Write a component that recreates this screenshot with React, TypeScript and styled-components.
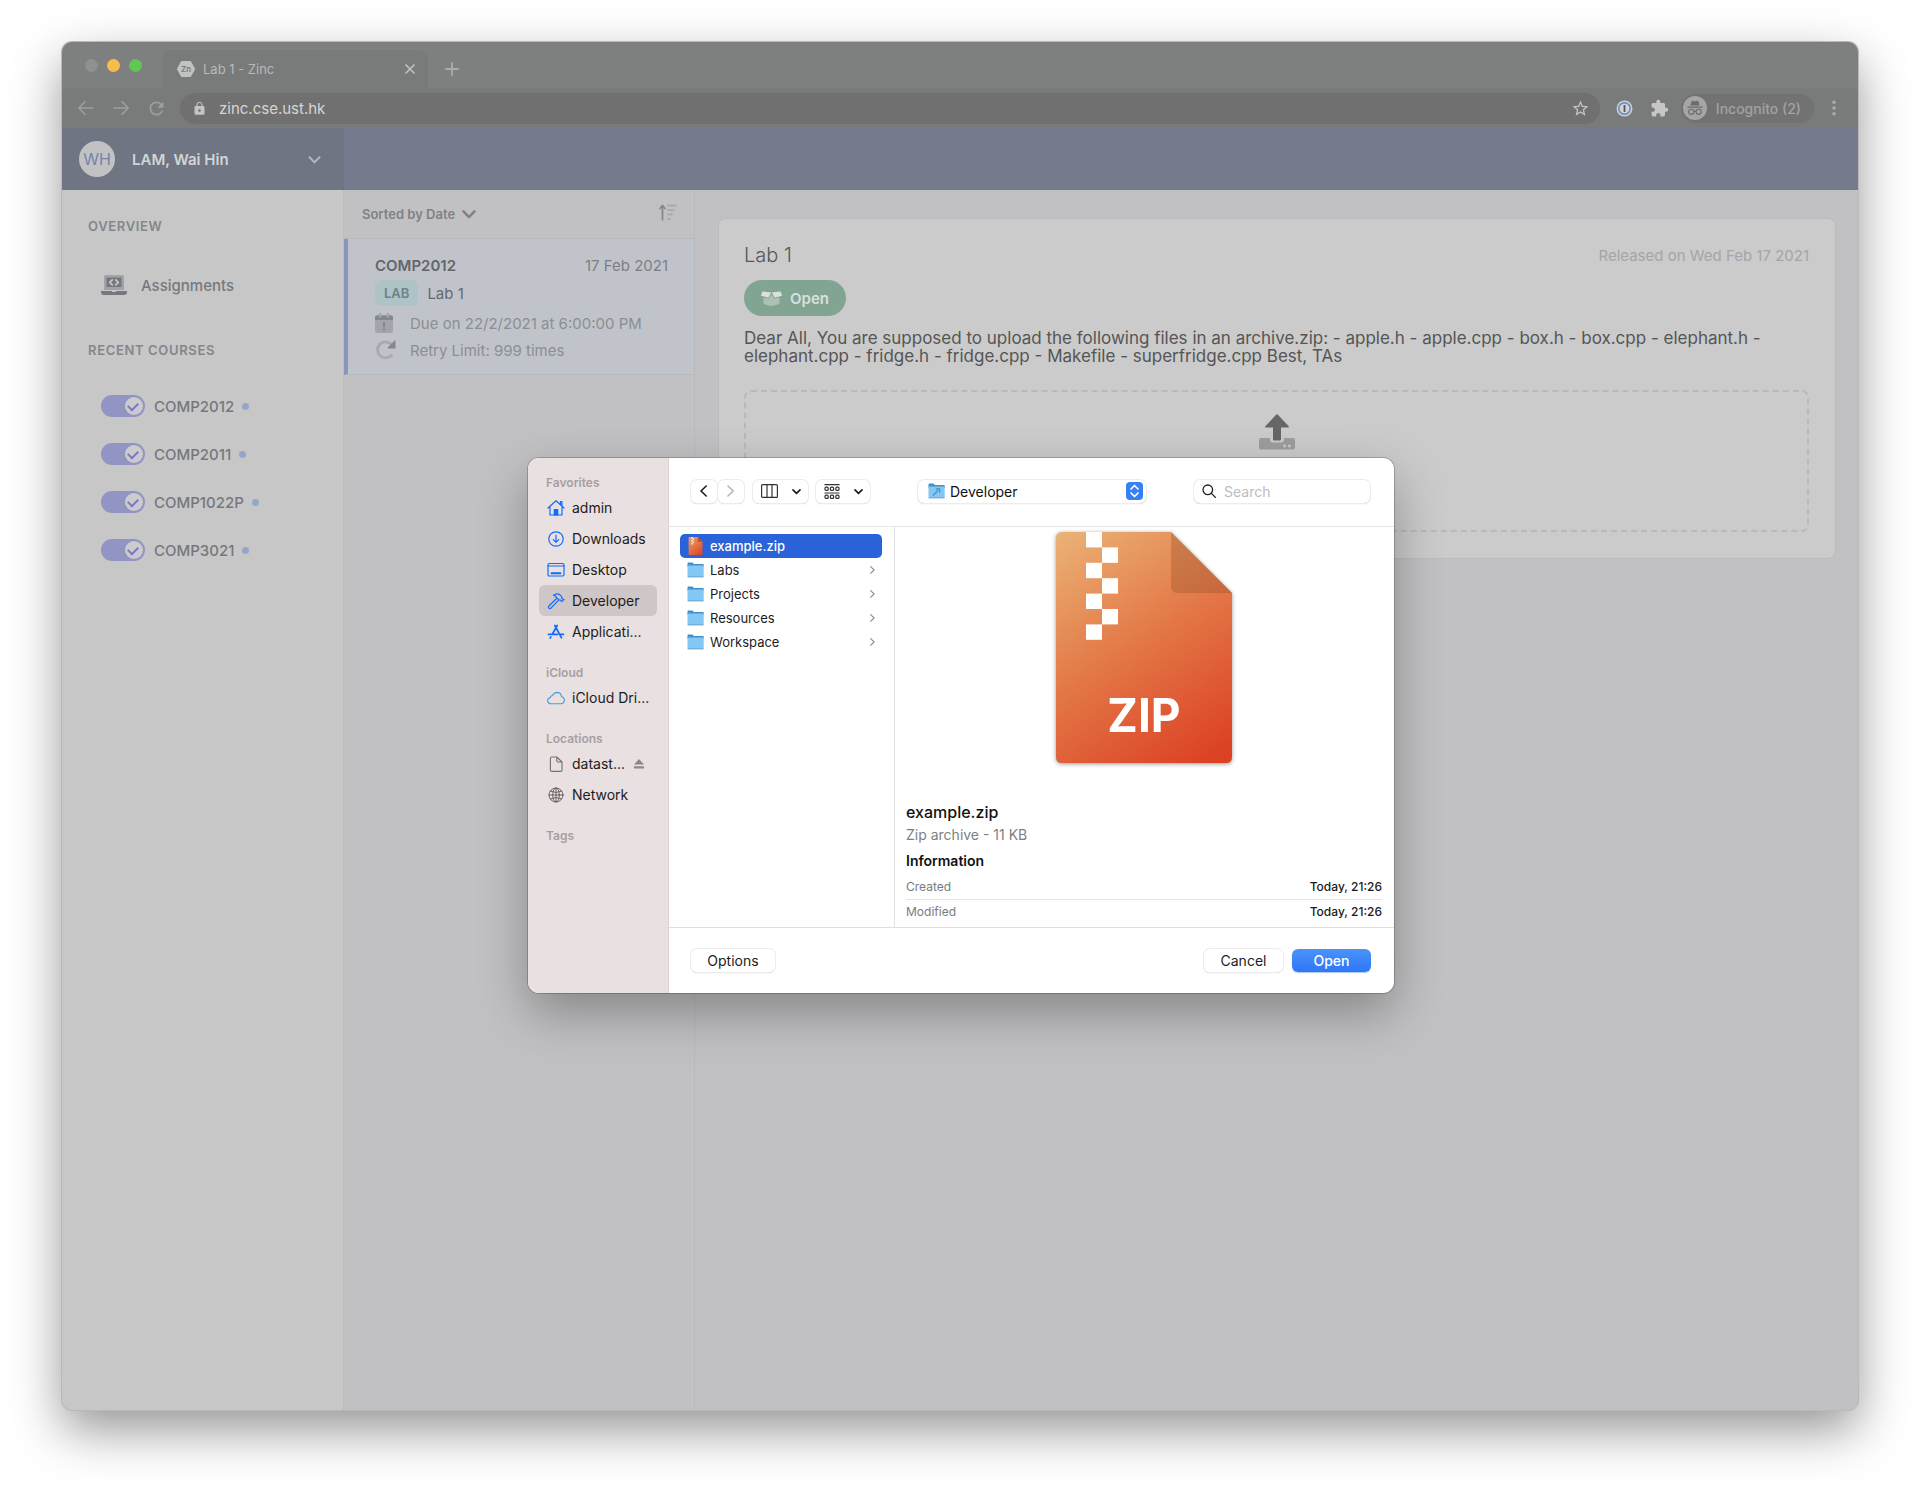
import React from "react";
import styled, { createGlobalStyle } from "styled-components";
import { MdExtension, MdLock, MdRefresh, MdStarBorder } from "react-icons/md";

const GlobalStyle = createGlobalStyle`
  * { box-sizing: border-box; }
  body {
    margin: 0;
    background: #ffffff;
    font-family: Inter, "Liberation Sans", sans-serif;
    font-size: 15px;
    color: #55585e;
  }
  button, input, select { font: inherit; color: inherit; }
  button { border: 0; padding: 0; background: none; }
  h1, h2, h3, p, ul { margin: 0; padding: 0; font-weight: 400; }
  ul { list-style: none; }
  svg { display: block; flex-shrink: 0; }
`;

/* ---------- browser window ---------- */

const Desktop = styled.div`
  display: flex;
  min-height: 100vh;
  padding: 42px 62px 81px;
`;

const BrowserWindow = styled.div`
  position: relative;
  flex: 1;
  display: flex;
  flex-direction: column;
  min-width: 0;
  border-radius: 10px;
  background: #c1c1c3;
  box-shadow: 0 0 0 1px #b9b9b9, 0 20px 50px rgba(0, 0, 0, 0.42);
`;

const TabStrip = styled.div`
  display: flex;
  align-items: flex-end;
  height: 46px;
  padding-left: 23px;
  border-radius: 10px 10px 0 0;
  background: #7e7f7f;
`;

const Lights = styled.div`
  display: flex;
  gap: 9px;
  align-self: center;
  padding-right: 21px;
`;

const Light = styled.button<{ $color: string }>`
  width: 13px;
  height: 13px;
  border-radius: 50%;
  background: ${(p) => p.$color};
`;

const Tab = styled.div`
  display: flex;
  align-items: center;
  gap: 8px;
  width: 265px;
  height: 38px;
  padding: 0 12px 0 14px;
  border-radius: 8px 8px 0 0;
  background: #797a7a;
  color: #b8b9b9;
  font-size: 13px;
`;

const TabTitle = styled.span`
  flex: 1;
`;

const NewTab = styled.button`
  display: grid;
  place-items: center;
  width: 48px;
  height: 38px;
  color: #abacac;
`;

const NavBar = styled.div`
  display: flex;
  align-items: center;
  height: 40px;
  padding: 0 4px 0 14px;
  background: #797a7a;
  color: #9d9e9e;
`;

const NavButton = styled.button<{ $width?: number }>`
  display: grid;
  place-items: center;
  width: ${(p) => p.$width ?? 35}px;
  height: 32px;
`;

const AddressBar = styled.div`
  display: flex;
  flex: 1;
  align-items: center;
  gap: 12px;
  height: 31px;
  margin-left: 14px;
  padding: 0 10px 0 12px;
  border-radius: 16px;
  background: #707071;
  color: #c4c4c4;
`;

const Address = styled.input`
  flex: 1;
  min-width: 0;
  padding: 0;
  border: 0;
  outline: 0;
  background: none;
  color: #d6d6d6;
  font-size: 15px;
`;

const Extensions = styled.div`
  display: flex;
  align-items: center;
  padding: 0 4px 0 7px;
  color: #c6c6c6;
`;

const IncognitoPill = styled.button`
  display: flex;
  align-items: center;
  gap: 9px;
  height: 29px;
  padding: 0 13px 0 2px;
  border-radius: 15px;
  background: #727272;
  color: #a2a2a2;
  font-size: 14px;
  font-weight: 500;
`;

/* ---------- web page ---------- */

const Page = styled.div`
  display: grid;
  flex: 1;
  grid-template-columns: 282px 351px 1fr;
  grid-template-rows: 62px 1fr;
`;

const Account = styled.button`
  display: flex;
  align-items: center;
  padding: 0 23px 0 17px;
  background: #6f7583;
  color: #d3d4d6;
  font-weight: 600;
  text-align: left;
`;

const AccountName = styled.span`
  flex: 1;
  padding-left: 17px;
`;

const Avatar = styled.span`
  display: grid;
  place-items: center;
  width: 36px;
  height: 36px;
  border-radius: 50%;
  background: #c1c2c3;
  color: #7583ac;
  font-size: 16px;
  font-weight: 400;
`;

const TopBar = styled.div`
  grid-column: 2 / 4;
  background: #757a8d;
`;

const Sidebar = styled.nav`
  padding: 26px 26px;
  border-right: 1px solid #bbbcc1;
  border-radius: 0 0 0 10px;
  background: #c7c7c7;
`;

const SideHeading = styled.h2`
  color: #83868c;
  font-size: 13px;
  font-weight: 600;
  line-height: 20px;
  letter-spacing: 0.05em;
`;

const SideLink = styled.a`
  display: flex;
  align-items: center;
  gap: 14px;
  height: 44px;
  margin: 27px 0 33px;
  padding-left: 13px;
  color: #75787e;
  font-weight: 500;
  text-decoration: none;
`;

const Courses = styled.ul`
  display: grid;
  gap: 24px;
  padding: 34px 0 0 13px;
`;

const Course = styled.label`
  display: flex;
  align-items: center;
  height: 24px;
  color: #75787e;
  font-weight: 500;
`;

const Toggle = styled.input`
  appearance: none;
  position: relative;
  display: flex;
  align-items: center;
  justify-content: flex-end;
  width: 44px;
  height: 22px;
  margin: 0 9px 0 0;
  padding: 2px;
  border-radius: 11px;
  background: #9195c4;
  &::before {
    content: "";
    width: 18px;
    height: 18px;
    border-radius: 50%;
    background: #cbcbcd;
  }
  &::after {
    content: "";
    position: absolute;
    top: 7px;
    right: 7px;
    width: 8px;
    height: 5px;
    border: solid #8078c0;
    border-width: 0 0 2px 2px;
    transform: rotate(-45deg);
  }
`;

const UnreadDot = styled.span`
  width: 7px;
  height: 7px;
  margin-left: 8px;
  border-radius: 50%;
  background: #94a7cb;
`;

const ListPane = styled.section`
  border-right: 1px solid #b8b9be;
`;

const SortBar = styled.div`
  display: flex;
  align-items: center;
  justify-content: space-between;
  height: 49px;
  padding: 0 17px 0 18px;
  border-bottom: 1px solid #b9babf;
`;

const SortButton = styled.button`
  display: flex;
  align-items: center;
  gap: 7px;
  color: #7f8287;
  font-size: 13px;
  font-weight: 600;
`;

const AssignmentItem = styled.article`
  padding: 15px 26px 13px 27px;
  border-bottom: 1px solid #b9babf;
  border-left: 4px solid #8796bd;
  background: #c0c4ca;
`;

const ItemRow = styled.div<{ $gap?: number; $top?: number }>`
  display: flex;
  align-items: center;
  gap: ${(p) => p.$gap ?? 0}px;
  min-height: 22px;
  margin-top: ${(p) => p.$top ?? 0}px;
  color: #8b8e93;
`;

const ItemCourse = styled.h3`
  flex: 1;
  color: #63666c;
  font-size: 15px;
  font-weight: 600;
`;

const ItemDate = styled.time`
  color: #7c7f85;
`;

const LabTag = styled.span`
  padding: 0 9px;
  border-radius: 6px;
  background: #aec3c5;
  color: #6a8487;
  font-size: 13px;
  font-weight: 600;
  line-height: 26px;
`;

const ItemTitle = styled.span`
  color: #65686e;
`;

const Details = styled.main`
  padding: 28px 22px 28px 23px;
`;

const Card = styled.section`
  padding: 22px 26px 26px 25px;
  border: 1px solid #bbbbbe;
  border-radius: 8px;
  background: #cbcbcb;
`;

const CardHeader = styled.header`
  display: flex;
  align-items: center;
  justify-content: space-between;
  height: 28px;
`;

const CardTitle = styled.h1`
  color: #55575b;
  font-size: 20px;
  font-weight: 300;
`;

const Released = styled.span`
  color: #a3a5a9;
`;

const StatusButton = styled.button`
  display: flex;
  align-items: center;
  gap: 8px;
  height: 36px;
  margin-top: 11px;
  padding: 0 17px;
  border-radius: 18px;
  background: #82a492;
  color: #dbe0dd;
  font-weight: 600;
`;

const Description = styled.p`
  margin-top: 13px;
  color: #555555;
  font-size: 17px;
  line-height: 18px;
`;

const DropZone = styled.button`
  display: flex;
  justify-content: center;
  align-items: flex-start;
  width: 100%;
  height: 142px;
  margin-top: 25px;
  padding-top: 22px;
  border: 2px dashed #b8b9bb;
  border-radius: 7px;
`;

/* ---------- file chooser ---------- */

const DialogLayer = styled.div`
  position: absolute;
  inset: 0;
  display: flex;
  align-items: flex-start;
  justify-content: center;
  padding: 416px 0 0 2px;
`;

const Dialog = styled.div`
  display: grid;
  grid-template-columns: 141px 1fr;
  width: 866px;
  border-radius: 11px;
  overflow: hidden;
  background: #ffffff;
  color: #1c1c1c;
  font-size: 14px;
  box-shadow: 0 0 0 1px rgba(0, 0, 0, 0.2), 0 20px 50px rgba(0, 0, 0, 0.3);
`;

const Places = styled.nav`
  display: flex;
  flex-direction: column;
  gap: 17px;
  padding: 16px 11px;
  border-right: 1px solid #ddd5d5;
  background: #e9e0e1;
`;

const PlacesHeading = styled.h2`
  padding-left: 7px;
  color: #a79fa0;
  font-size: 12px;
  font-weight: 600;
  line-height: 18px;
`;

const Place = styled.button<{ $active?: boolean }>`
  display: flex;
  align-items: center;
  gap: 7px;
  width: 118px;
  height: 31px;
  padding-left: 8px;
  border-radius: 6px;
  background: ${(p) => (p.$active ? "#cfc6c7" : "transparent")};
  white-space: nowrap;
`;

const Eject = styled.span`
  margin-left: auto;
  padding-right: 13px;
`;

const Toolbar = styled.div`
  display: flex;
  align-items: center;
  height: 69px;
  padding: 0 24px 2px 22px;
  border-bottom: 1px solid #e5e5e5;
`;

const ToolButton = styled.button<{ $width: number; $left?: number }>`
  display: flex;
  align-items: center;
  justify-content: center;
  gap: 14px;
  width: ${(p) => p.$width}px;
  height: 23px;
  margin-left: ${(p) => p.$left ?? 0}px;
  border-radius: 6px;
  background: #ffffff;
  box-shadow: 0 0 0 1px #ececec, 0 1px 1px #bcbcbc;
`;

const FolderPicker = styled.div`
  display: flex;
  align-items: center;
  gap: 5px;
  width: 228px;
  height: 23px;
  margin: 0 auto 0 48px;
  padding: 0 3px 0 10px;
  border-radius: 6px;
  box-shadow: 0 0 0 1px #ececec, 0 1px 1px #bcbcbc;
`;

const FolderSelect = styled.select`
  appearance: none;
  flex: 1;
  padding: 0;
  border: 0;
  outline: 0;
  background: none;
  color: #111111;
`;

const SearchBox = styled.label`
  display: flex;
  align-items: center;
  gap: 8px;
  width: 176px;
  height: 23px;
  padding: 0 8px;
  border-radius: 6px;
  box-shadow: 0 0 0 1px #ececec, 0 1px 1px #bcbcbc;
`;

const SearchInput = styled.input`
  flex: 1;
  min-width: 0;
  padding: 0;
  border: 0;
  outline: 0;
  background: none;
  &::placeholder { color: #bdbdbd; opacity: 1; }
`;

const Browser = styled.div`
  display: grid;
  grid-template-columns: 226px 1fr;
  height: 400px;
`;

const FileColumn = styled.ul`
  padding: 7px 12px 0 11px;
  border-right: 1px solid #e2e2e2;
`;

const FileRow = styled.button<{ $selected?: boolean }>`
  display: flex;
  align-items: center;
  gap: 6px;
  width: 202px;
  height: 24px;
  padding: 0 7px;
  border-radius: 5px;
  background: ${(p) => (p.$selected ? "#2962d9" : "transparent")};
  color: ${(p) => (p.$selected ? "#ffffff" : "#1c1c1c")};
  font-size: 13px;
  font-weight: ${(p) => (p.$selected ? 500 : 400)};
  text-align: left;
`;

const FileName = styled.span`
  flex: 1;
`;

const Preview = styled.section`
  display: flex;
  flex-direction: column;
  padding: 5px 12px 0 11px;
`;

const ZipArt = styled.svg`
  align-self: center;
  overflow: visible;
  filter: drop-shadow(0 1px 2px rgba(0, 0, 0, 0.4));
`;

const PreviewName = styled.h2`
  margin-top: 39px;
  color: #111111;
  font-size: 16px;
  font-weight: 500;
  line-height: 20px;
`;

const PreviewKind = styled.p`
  margin-top: 4px;
  color: #7f7f7f;
  line-height: 18px;
`;

const PreviewHeading = styled.h3`
  margin: 8px 0 4px;
  color: #111111;
  font-size: 14px;
  font-weight: 600;
  line-height: 18px;
`;

const InfoTable = styled.table`
  width: 100%;
  border-collapse: collapse;
  font-size: 12px;
`;

const InfoRow = styled.tr`
  height: 25px;
  & + & { border-top: 1px solid #e4e4e4; }
  th { padding: 0; color: #7a7a7a; font-weight: 400; text-align: left; }
  td { padding: 0; color: #1a1a1a; font-weight: 500; text-align: right; }
`;

const DialogFooter = styled.footer`
  display: flex;
  align-items: center;
  gap: 9px;
  height: 66px;
  padding: 0 23px 0 22px;
  border-top: 1px solid #e0e0e0;
`;

const DialogButton = styled.button<{ $width: number; $primary?: boolean; $first?: boolean }>`
  width: ${(p) => p.$width}px;
  height: 23px;
  margin-right: ${(p) => (p.$first ? "auto" : "0")};
  border-radius: 6px;
  background: ${(p) => (p.$primary ? "linear-gradient(#4a93fb, #2f76f6)" : "#ffffff")};
  box-shadow: ${(p) => (p.$primary ? "0 1px 1px #a9c8f5" : "0 0 0 1px #ececec, 0 1px 1px #bcbcbc")};
  color: ${(p) => (p.$primary ? "#ffffff" : "#1c1c1c")};
  font-weight: ${(p) => (p.$primary ? 500 : 400)};
`;

/* ---------- drawings ---------- */

type LineProps = { size?: number; w?: number; color?: string; children: React.ReactNode; box?: number };

const Line = ({ size = 18, w = 1.4, color = "currentColor", box = 18, children }: LineProps) => (
  <svg width={size} height={size} viewBox={`0 0 ${box} ${box}`} fill="none" stroke={color} strokeWidth={w} strokeLinecap="round" strokeLinejoin="round" aria-hidden="true">
    {children}
  </svg>
);

const Chevron = ({ width = 12, w = 2, color = "currentColor" }) => (
  <svg width={width} height={width} viewBox="0 0 12 12" fill="none" stroke={color} strokeWidth={w} strokeLinecap="round" strokeLinejoin="round" aria-hidden="true">
    <path d="M1.3 3.8 6 8.6l4.7-4.8" />
  </svg>
);

const SideChevron = ({ flip = false, color = "#1c1c1c", h = 12, w = 1.6 }) => (
  <svg width={h * 0.6} height={h} viewBox="0 0 7.2 12" fill="none" stroke={color} strokeWidth={w} strokeLinecap="round" strokeLinejoin="round" aria-hidden="true">
    <path d={flip ? "M6.2 1 1 6l5.2 5" : "M1 1l5.2 5L1 11"} />
  </svg>
);

const Favicon = () => (
  <svg width="18" height="16" viewBox="0 0 18 16" aria-hidden="true">
    <path d="M5 0h8q.8 0 1.200.7l3.500 6.300q.5 1 0 2l-3.500 6.300q-.4.7-1.200.7H5q-.8 0-1.200-.7L.3 9q-.5-1 0-2L3.800.7Q4.200 0 5 0z" fill="#c1c2c2" />
    <text x="9" y="11" textAnchor="middle" fontSize="8" fontWeight="600" fill="#787979">Zn</text>
  </svg>
);

const LaptopCode = () => (
  <svg width="26" height="20" viewBox="0 0 26 20" aria-hidden="true">
    <path d="M4.500 0h17A1.500 1.500 0 0 1 23 1.500V15H3V1.500A1.500 1.500 0 0 1 4.500 0z" fill="#a1a3a7" />
    <path d="M5.500 2.500h15V12h-15z" fill="#75787e" />
    <path d="M11.300 4.800 8.700 7.300l2.600 2.500M14.700 4.800l2.600 2.500-2.600 2.500" fill="none" stroke="#c7c7c7" strokeWidth="1.700" strokeLinecap="round" strokeLinejoin="round" />
    <path d="M0 16h10.500l.8 1h3.400l.8-1H26v1a3 3 0 0 1-3 3H3a3 3 0 0 1-3-3z" fill="#75787e" />
  </svg>
);

const CalendarAlert = () => (
  <svg width="18" height="20" viewBox="0 0 18 20" aria-hidden="true">
    <path d="M0 7h18v11a2 2 0 0 1-2 2H2a2 2 0 0 1-2-2zM4 0h2.400v4H4zM11.600 0H14v4h-2.400z" fill="#a2a5aa" />
    <path d="M2 2.300h2v2h2.400v-2h5.200v2H14v-2h2a2 2 0 0 1 2 2V7H0V4.300a2 2 0 0 1 2-2zM7.900 9h2.200l-.3 5.500H8.200z" fill="#84878c" />
    <circle cx="9" cy="16.600" r="1.200" fill="#84878c" />
  </svg>
);

const Retry = () => (
  <svg width="21" height="20" viewBox="0 0 21 20" aria-hidden="true">
    <path d="M16.500 15.200A8 8 0 1 1 16 4" fill="none" stroke="#a6a9ae" strokeWidth="2.800" strokeLinecap="round" />
    <path d="M20.500.8V8q0 .6-.6.6h-6.500q-1.300-.1-.5-1.100l6.600-7q.9-.7 1 .3z" fill="#84878c" />
  </svg>
);

const SortIcon = () => (
  <svg width="18" height="20" viewBox="0 0 18 20" aria-hidden="true">
    <path d="M3.500 15.500V2.500M1 4.500l2.500-3L6 4.500" fill="none" stroke="#85888d" strokeWidth="1.800" strokeLinecap="round" strokeLinejoin="round" />
    <path d="M9 1.500h8M9 6h6M9 10.500h4M9 15h2" stroke="#a8aaae" strokeWidth="1.800" strokeLinecap="round" />
  </svg>
);

const BoxOpen = () => (
  <svg width="21" height="15" viewBox="0 0 21 15" aria-hidden="true">
    <path d="M2.500 6.500 7.500 7.400l3-4 3 4 5-.9v5.700q0 .8-.8 1l-6.400 1.700q-.8.200-1.600 0L3.300 13.200q-.8-.2-.8-1z" fill="#abc1b4" />
    <path d="M2 .4 10.300 1.500 7.700 6q-.4.600-1 .4L.6 5Q-.1 4.800.2 4.100L1.300.8Q1.500.3 2 .4zM19 .4 10.700 1.500 13.300 6q.4.600 1 .4l6.100-1.400q.7-.2.400-.9L19.700.8q-.2-.5-.7-.4z" fill="#dbe0dd" />
  </svg>
);

const UploadIcon = () => (
  <svg width="36" height="36" viewBox="0 0 36 36" aria-hidden="true">
    <path d="M2 24h9v1.500q0 3 3 3h8q3 0 3-3V24h9a2 2 0 0 1 2 2v7.500a2 2 0 0 1-2 2H2a2 2 0 0 1-2-2V26a2 2 0 0 1 2-2z" fill="#9c9d9e" />
    <path d="M18.900.8 29.500 12q1 1.500-.8 1.500H22v11.700q0 1.300-1.300 1.300h-5.400q-1.300 0-1.300-1.300V13.500H7.300q-1.800 0-.8-1.500L17.100.8q.9-.9 1.800 0z" fill="#666666" />
    <circle cx="25.500" cy="32" r="1.400" fill="#cbcbcb" />
    <circle cx="30.500" cy="32" r="1.400" fill="#cbcbcb" />
  </svg>
);

const OnePassword = () => (
  <svg width="17" height="17" viewBox="0 0 17 17" aria-hidden="true">
    <circle cx="8.500" cy="8.500" r="8" fill="#cfcfcf" />
    <circle cx="8.500" cy="8.500" r="5.700" fill="#d4d4d4" stroke="#6f90c6" strokeWidth="1.700" />
    <rect x="7.600" y="5" width="1.800" height="7" rx=".6" fill="#555" />
  </svg>
);

const IncognitoIcon = () => (
  <svg width="24" height="24" viewBox="0 0 24 24" aria-hidden="true">
    <circle cx="12" cy="12" r="12" fill="#a5a5a5" />
    <path d="M8.700 5.300q.2-.7.900-.5l2.400.6 2.400-.6q.7-.2.900.5L16.500 9.500h-9zM4.500 10.500h15v1.200h-15z" fill="#6c6c6c" />
    <g fill="none" stroke="#6c6c6c" strokeWidth="1.100">
      <circle cx="8.300" cy="15.800" r="2.600" />
      <circle cx="15.700" cy="15.800" r="2.600" />
      <path d="M10.900 15.500q1.100-.7 2.200 0" />
    </g>
  </svg>
);

const Folder = ({ dev = false }) => (
  <svg width="17" height="16" viewBox="0 0 17 16" aria-hidden="true">
    <path d="M.5 1.500Q.5.500 1.500.5h4l1.400 1.500h9q.8 0 .8.800V5H.5z" fill="#4590c8" />
    <path d="M.5 3.500h16.200v10.700q0 .8-.8.800H1.300q-.8 0-.8-.8z" fill="#83c7f4" />
    <path d="M.7 14.900h15.800" stroke="#68a5cf" strokeWidth="1" />
    {dev && <path d="M5 12.500 10 7.500M7.800 6h3.800v3.500" stroke="#4a94c9" strokeWidth="1.300" fill="none" />}
  </svg>
);

const zipShape = "M6 0h109l61 61v164q0 6-6 6H6q-6 0-6-6V6q0-6 6-6z";

const SmallZip = () => (
  <svg width="17" height="18" viewBox="0 0 17 18" aria-hidden="true">
    <defs>
      <linearGradient id="zip-small" x1="1" y1="0" x2="15" y2="18" gradientUnits="userSpaceOnUse">
        <stop offset="0" stopColor="#eba568" />
        <stop offset="1" stopColor="#dc4226" />
      </linearGradient>
    </defs>
    <path d="M2.500 0h8.300L15.500 4.700v12.400q0 .9-.9.900H2.500q-.9 0-.9-.9V.9q0-.9.900-.9z" fill="url(#zip-small)" />
    <path d="M10.800 0v4.700h4.700z" fill="#b9532e" />
    <path d="M4.300 0h1.300v1.500H4.300zM5.600 1.500h1.300V3H5.600zM4.300 3h1.300v1.500H4.300zM5.600 4.500h1.300V6H5.600zM4.300 6h1.300v1.500H4.300z" fill="#fff" />
  </svg>
);

const ZipIcon = () => (
  <ZipArt width="176" height="231" viewBox="0 0 176 231" role="img" aria-label="ZIP">
    <defs>
      <linearGradient id="zip" x1="0" y1="0" x2="150" y2="231" gradientUnits="userSpaceOnUse">
        <stop offset="0" stopColor="#ebb376" />
        <stop offset=".5" stopColor="#e37747" />
        <stop offset="1" stopColor="#dc4124" />
      </linearGradient>
    </defs>
    <path d={zipShape} fill="url(#zip)" />
    <path d="M115 0l61 61h-54q-7 0-7-7z" fill="#8a4a20" fillOpacity=".3" />
    {[0, 1, 2, 3, 4, 5, 6].map((i) => (
      <rect key={i} x={i % 2 ? 46 : 30} y={i * 15.4} width="16" height="15.400" fill="#fff" />
    ))}
    <text x="88" y="200" textAnchor="middle" fontSize="46" fontWeight="700" fill="#fff">ZIP</text>
  </ZipArt>
);

const blue = "#0f6bff";

const HomeIcon = () => (
  <Line color={blue} w={1.2}>
    <path d="M1 9 9 1.800 17 9M3 7.500V16h12V7.500M13.500 5.500V2.600h1.500v4.200" />
    <path d="M7.300 16v-5.500h3.400V16z" fill={blue} />
  </Line>
);
const DownloadIcon = () => (
  <Line color={blue} w={1.2}><circle cx="9" cy="9" r="7.200" /><path d="M9 5.200v7M6.300 9.600 9 12.200l2.700-2.600" /></Line>
);
const DesktopIcon = () => (
  <Line color={blue} w={1.2}><rect x="1" y="2.500" width="16" height="12.500" rx="1.200" /><path d="M1 5h16" /><path d="M4.500 12.200h9" strokeWidth="1.900" /></Line>
);
const HammerIcon = () => (
  <Line color={blue} w={1.2}>
    <path d="M9.300 6.800 1.700 14.300q-.8 1 .1 1.900t1.900.1l7.500-7.600M6.500 3.200q3-2.400 6.200-.6l2 2.100v1.400l1 .9 1.300.3-2.300 2.400-1.200-1.700-1.600-.2-2.600-2.400q-.2-1.600-2.800-2.200z" />
  </Line>
);
const AppStoreIcon = () => (
  <Line color={blue} w={1.7}><path d="M10.200 2.500 5.500 11M7.800 2.500l6.700 12.300M1.500 11.300h9M13.200 11.300h3.300M3.800 14l-.6 1" /></Line>
);
const CloudIcon = () => (
  <Line color="#41a3d8" w={1.1}><path d="M4.200 14.800q-3.400-.2-3.600-3.200.1-2.600 2.700-3 .1-2 2.300-2 1.300-3.200 4.400-3.200 4 .1 4.600 4.300 2.700.5 2.800 3.400-.2 3.500-3.400 3.700z" /></Line>
);
const FileIcon = () => (
  <Line color="#766f70" w={1.1}><path d="M4.800 2h5L15 7v8q0 1.400-1.400 1.400H4.800Q3.400 16.400 3.400 15V3.400Q3.400 2 4.800 2zM9.800 2v3.800q0 1.200 1.200 1.200h4" /></Line>
);
const GlobeIcon = () => (
  <Line color="#5f5959" w={0.9}>
    <circle cx="9" cy="9" r="7" />
    <ellipse cx="9" cy="9" rx="3.300" ry="7" />
    <path d="M2 9h14M9 2v14M3.300 5.200q5.700 2.700 11.400 0M3.300 12.800q5.700-2.700 11.400 0" />
  </Line>
);

/* ---------- data ---------- */

const courses = ["COMP2012", "COMP2011", "COMP1022P", "COMP3021"];

const places = [
  {
    title: "Favorites",
    items: [
      { name: "admin", icon: <HomeIcon /> },
      { name: "Downloads", icon: <DownloadIcon /> },
      { name: "Desktop", icon: <DesktopIcon /> },
      { name: "Developer", icon: <HammerIcon />, active: true },
      { name: "Applicati...", icon: <AppStoreIcon /> },
    ],
  },
  { title: "iCloud", items: [{ name: "iCloud Dri...", icon: <CloudIcon /> }] },
  {
    title: "Locations",
    items: [
      { name: "datast...", icon: <FileIcon />, eject: true },
      { name: "Network", icon: <GlobeIcon /> },
    ],
  },
  { title: "Tags", items: [] },
] as { title: string; items: { name: string; icon: React.ReactNode; active?: boolean; eject?: boolean }[] }[];

const folders = ["Labs", "Projects", "Resources", "Workspace"];

const dates = [
  ["Created", "Today, 21:26"],
  ["Modified", "Today, 21:26"],
];

/* ---------- sections ---------- */

const BrowserChrome = () => (
  <>
    <TabStrip>
      <Lights>
        <Light $color="#8f9091" aria-label="Close window" />
        <Light $color="#f5bd4c" aria-label="Minimise window" />
        <Light $color="#62c654" aria-label="Zoom window" />
      </Lights>
      <Tab>
        <Favicon />
        <TabTitle>Lab 1 - Zinc</TabTitle>
        <NavButton $width={12} aria-label="Close tab">
          <Line size={12} box={12} w={1.7} color="#c0c0c0"><path d="M2 2l8 8M10 2l-8 8" /></Line>
        </NavButton>
      </Tab>
      <NewTab aria-label="New tab">
        <Line size={14} box={14} w={1.8}><path d="M7 1v12M1 7h12" /></Line>
      </NewTab>
    </TabStrip>
    <NavBar>
      <NavButton $width={20} aria-label="Back">
        <Line size={20} box={20} w={1.6}><path d="M17 10H3M9 3.800 2.800 10 9 16.200" /></Line>
      </NavButton>
      <NavButton $width={50} aria-label="Forward">
        <Line size={20} box={20} w={1.6}><path d="M3 10h14M11 3.800l6.200 6.200-6.200 6.200" /></Line>
      </NavButton>
      <NavButton $width={20} aria-label="Reload"><MdRefresh size={21} /></NavButton>
      <AddressBar>
        <MdLock size={15} />
        <Address aria-label="Address" defaultValue="zinc.cse.ust.hk" />
        <MdStarBorder size={19} />
      </AddressBar>
      <Extensions>
        <NavButton aria-label="1Password"><OnePassword /></NavButton>
        <NavButton aria-label="Extensions"><MdExtension size={19} /></NavButton>
      </Extensions>
      <IncognitoPill>
        <IncognitoIcon />
        Incognito (2)
      </IncognitoPill>
      <NavButton $width={40} aria-label="Menu">
        <svg width="4" height="16" viewBox="0 0 4 16" fill="#acacac" aria-hidden="true">
          <circle cx="2" cy="2.200" r="1.700" /><circle cx="2" cy="8" r="1.700" /><circle cx="2" cy="13.800" r="1.700" />
        </svg>
      </NavButton>
    </NavBar>
  </>
);

const WebPage = () => (
  <Page>
    <Account>
      <Avatar>WH</Avatar>
      <AccountName>LAM, Wai Hin</AccountName>
      <Chevron width={13} w={1.8} color="#b7bac0" />
    </Account>
    <TopBar />
    <Sidebar>
      <SideHeading>OVERVIEW</SideHeading>
      <SideLink href="#assignments"><LaptopCode />Assignments</SideLink>
      <SideHeading>RECENT COURSES</SideHeading>
      <Courses>
        {courses.map((name) => (
          <li key={name}>
            <Course>
              <Toggle type="checkbox" defaultChecked />
              {name}
              <UnreadDot />
            </Course>
          </li>
        ))}
      </Courses>
    </Sidebar>
    <ListPane>
      <SortBar>
        <SortButton>Sorted by Date <Chevron width={14} w={2.2} /></SortButton>
        <SortButton aria-label="Sort order"><SortIcon /></SortButton>
      </SortBar>
      <AssignmentItem>
        <ItemRow>
          <ItemCourse>COMP2012</ItemCourse>
          <ItemDate>17 Feb 2021</ItemDate>
        </ItemRow>
        <ItemRow $gap={9} $top={4}>
          <LabTag>LAB</LabTag>
          <ItemTitle>Lab 1</ItemTitle>
        </ItemRow>
        <ItemRow $gap={17} $top={6}><CalendarAlert />Due on 22/2/2021 at 6:00:00 PM</ItemRow>
        <ItemRow $gap={14} $top={5}><Retry />Retry Limit: 999 times</ItemRow>
      </AssignmentItem>
    </ListPane>
    <Details>
      <Card>
        <CardHeader>
          <CardTitle>Lab 1</CardTitle>
          <Released>Released on Wed Feb 17 2021</Released>
        </CardHeader>
        <StatusButton><BoxOpen />Open</StatusButton>
        <Description>
          Dear All, You are supposed to upload the following files in an archive.zip: - apple.h - apple.cpp - box.h - box.cpp - elephant.h - elephant.cpp - fridge.h - fridge.cpp - Makefile - superfridge.cpp Best, TAs
        </Description>
        <DropZone aria-label="Upload files"><UploadIcon /></DropZone>
      </Card>
    </Details>
  </Page>
);

const FileDialog = () => (
  <DialogLayer>
    <Dialog role="dialog" aria-label="Open file">
      <Places>
        {places.map((group) => (
          <div key={group.title}>
            <PlacesHeading>{group.title}</PlacesHeading>
            {group.items.map((item) => (
              <Place key={item.name} $active={item.active}>
                {item.icon}
                {item.name}
                {item.eject && (
                  <Eject>
                    <svg width="10" height="10" viewBox="0 0 10 10" fill="#8f8788" aria-hidden="true">
                      <path d="M5 0l5 5.500H0zM0 7.300h10V9.500H0z" />
                    </svg>
                  </Eject>
                )}
              </Place>
            ))}
          </div>
        ))}
      </Places>
      <div>
        <Toolbar>
          <ToolButton $width={26} aria-label="Back"><SideChevron flip /></ToolButton>
          <ToolButton $width={26} $left={1} aria-label="Forward"><SideChevron color="#b5b5b5" /></ToolButton>
          <ToolButton $width={55} $left={9} aria-label="Column view">
            <svg width="17" height="14" viewBox="0 0 17 14" fill="none" stroke="#333" strokeWidth="1.200" aria-hidden="true">
              <rect x=".6" y=".6" width="15.800" height="12.800" rx="1" /><path d="M6 .6v12.800M11 .6v12.800" />
            </svg>
            <Chevron width={9} w={2.2} />
          </ToolButton>
          <ToolButton $width={54} $left={8} aria-label="Group items">
            <svg width="16" height="15" viewBox="0 0 16 15" fill="none" stroke="#333" strokeWidth="1.200" aria-hidden="true">
              <path d="M.5.700h15M.5 9h15" />
              {[1, 6.4, 11.8].map((x) => (
                <g key={x}><rect x={x} y="3.200" width="3.200" height="3.200" rx="1" /><rect x={x} y="11.200" width="3.200" height="3.200" rx="1" /></g>
              ))}
            </svg>
            <Chevron width={9} w={2.2} />
          </ToolButton>
          <FolderPicker>
            <Folder dev />
            <FolderSelect aria-label="Folder"><option>Developer</option></FolderSelect>
            <svg width="17" height="18" viewBox="0 0 17 18" aria-hidden="true">
              <rect width="17" height="18" rx="4" fill="#3580f7" />
              <path d="M5 7l3.500-3.500L12 7M5 11l3.500 3.500L12 11" fill="none" stroke="#fff" strokeWidth="1.700" strokeLinecap="round" strokeLinejoin="round" />
            </svg>
          </FolderPicker>
          <SearchBox>
            <Line size={14} box={14} w={1.3} color="#222"><circle cx="5.800" cy="5.800" r="4.800" /><path d="M9.400 9.400l4 4" /></Line>
            <SearchInput type="text" placeholder="Search" aria-label="Search" />
          </SearchBox>
        </Toolbar>
        <Browser>
          <FileColumn>
            <li><FileRow $selected><SmallZip /><FileName>example.zip</FileName></FileRow></li>
            {folders.map((name) => (
              <li key={name}>
                <FileRow><Folder /><FileName>{name}</FileName><SideChevron h={8} color="#8a8a8a" /></FileRow>
              </li>
            ))}
          </FileColumn>
          <Preview>
            <ZipIcon />
            <PreviewName>example.zip</PreviewName>
            <PreviewKind>Zip archive - 11 KB</PreviewKind>
            <PreviewHeading>Information</PreviewHeading>
            <InfoTable>
              <tbody>
                {dates.map(([label, value]) => (
                  <InfoRow key={label}><th scope="row">{label}</th><td>{value}</td></InfoRow>
                ))}
              </tbody>
            </InfoTable>
          </Preview>
        </Browser>
        <DialogFooter>
          <DialogButton $width={84} $first>Options</DialogButton>
          <DialogButton $width={79}>Cancel</DialogButton>
          <DialogButton $width={79} $primary>Open</DialogButton>
        </DialogFooter>
      </div>
    </Dialog>
  </DialogLayer>
);

export default function App() {
  return (
    <>
      <GlobalStyle />
      <Desktop>
        <BrowserWindow>
          <BrowserChrome />
          <WebPage />
          <FileDialog />
        </BrowserWindow>
      </Desktop>
    </>
  );
}
